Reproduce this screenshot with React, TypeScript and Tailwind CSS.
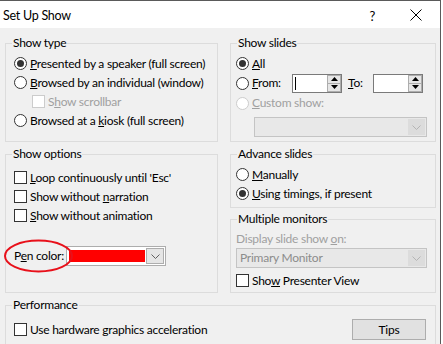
import type { ReactNode } from "react"

const Radio = ({ checked, disabled }: { checked?: boolean; disabled?: boolean }) => (
    <span className={`flex h-[13px] w-[13px] shrink-0 items-center justify-center rounded-full border bg-white ${disabled ? "border-[#cccccc]" : "border-[#333333]"}`}>
        {checked && <span className="h-[7px] w-[7px] rounded-full bg-[#333333]" />}
    </span>
)

const Check = ({ disabled }: { disabled?: boolean }) => (
    <span className={`h-[13px] w-[13px] shrink-0 border bg-white ${disabled ? "border-[#cccccc]" : "border-[#333333]"}`} />
)

const Group = ({ title, className, children }: { title: string; className: string; children?: ReactNode }) => (
    <div className={`relative shrink-0 border border-[#dcdcdc] ${className}`}>
        <span className="absolute -top-[9px] left-[6px] bg-[#f0f0f0] px-[1px] leading-[16px]">{title}</span>
        {children}
    </div>
)

const Chevron = ({ color }: { color: string }) => (
    <svg width="9" height="5" viewBox="0 0 9 5">
        <path d="M0.5 0.5 L4.5 4.5 L8.5 0.5" fill="none" stroke={color} strokeWidth="1" />
    </svg>
)

const Spin = ({ cursor }: { cursor?: boolean }) => (
    <div className="flex h-[19px] w-[50px] border border-[#7a7a7a] bg-white">
        <div className="flex flex-1 items-center pl-[2px]">
            {cursor && <span className="h-[13px] w-px bg-black" />}
        </div>
        <div className="flex w-[14px] flex-col border border-[#adadad] bg-[#e6e6e6]">
            <div className="flex flex-1 items-center justify-center border-b border-[#adadad]">
                <svg width="7" height="4" viewBox="0 0 7 4"><path d="M0 4 L3.5 0 L7 4 Z" fill="#000" /></svg>
            </div>
            <div className="flex flex-1 items-center justify-center">
                <svg width="7" height="4" viewBox="0 0 7 4"><path d="M0 0 L3.5 4 L7 0 Z" fill="#000" /></svg>
            </div>
        </div>
    </div>
)

const DisabledSelect = ({ text, className }: { text?: string; className: string }) => (
    <div className={`flex h-[20px] border border-[#c4c4c4] bg-[#e8e8e8] ${className}`}>
        <div className="flex flex-1 items-center pl-[3px] text-[#8c8c8c]">{text}</div>
        <div className="m-[1px] flex w-[17px] items-center justify-center bg-[#dcdcdc]">
            <Chevron color="#b4b4b4" />
        </div>
    </div>
)

const row = "flex h-[19px] items-center gap-[3px]"

export default function App() {
    return (
        <div className="h-[344px] w-[443px] overflow-hidden whitespace-nowrap bg-white font-['Lato',sans-serif] text-[12px] leading-[16px] tracking-[-0.25px] text-black">
            <div className="flex h-full w-[441px] flex-col border-r border-t border-[#5a5a5a]">

                <div className="flex h-[27px] shrink-0 items-center bg-white pl-[3px]">
                    <span className="pt-[2px] text-[12.5px]">Set Up Show</span>
                    <span className="ml-auto pt-[2px] text-[13px]">?</span>
                    <svg className="ml-[35px] mr-[18px]" width="12" height="12" viewBox="0 0 12 12">
                        <path d="M0.5 0.5 L11.5 11.5 M11.5 0.5 L0.5 11.5" stroke="#000" strokeWidth="1" />
                    </svg>
                </div>

                <div className="flex flex-1 flex-col bg-[#f0f0f0] pl-[5px] pt-[15px]">

                    <div className="flex shrink-0 gap-[12px]">
                        <Group title="Show type" className="h-[99px] w-[213px]">
                            <div className="flex flex-col pl-[8px] pt-[10px]">
                                <div className={row}><Radio checked /><span><u>P</u>resented by a speaker (full screen)</span></div>
                                <div className={row}><Radio /><span><u>B</u>rowsed by an individual (window)</span></div>
                                <div className={`${row} h-[18px] pl-[18px] text-[#a0a0a0]`}><Check disabled /><span>S<u>h</u>ow scrollbar</span></div>
                                <div className={row}><Radio /><span>Browsed at a <u>k</u>iosk (full screen)</span></div>
                            </div>
                        </Group>

                        <Group title="Show slides" className="h-[99px] w-[206px]">
                            <div className="flex flex-col pl-[5px] pt-[10px]">
                                <div className={row}><Radio checked /><span><u>A</u>ll</span></div>
                                <div className="flex h-[20px] items-center gap-[3px]">
                                    <Radio />
                                    <span className="w-[37px]"><u>F</u>rom:</span>
                                    <Spin cursor />
                                    <span className="ml-[3px] w-[22px]"><u>T</u>o:</span>
                                    <Spin />
                                </div>
                                <div className="flex h-[20px] items-center gap-[3px] text-[#a0a0a0]"><Radio disabled /><span><u>C</u>ustom show:</span></div>
                                <DisabledSelect className="ml-[18px] mt-[4px] w-[173px]" />
                            </div>
                        </Group>
                    </div>

                    <div className="mt-[12px] flex shrink-0 gap-[12px]">
                        <Group title="Show options" className="h-[139px] w-[213px]">
                            <div className="flex flex-col pl-[8px] pt-[13px]">
                                <div className={row}><Check /><span><u>L</u>oop continuously until 'Esc'</span></div>
                                <div className={row}><Check /><span>Show without <u>n</u>arration</span></div>
                                <div className={row}><Check /><span><u>S</u>how without animation</span></div>
                                <div className="mt-[21px] flex h-[20px] items-center">
                                    <span className="w-[52px]">P<u>e</u>n color:</span>
                                    <div className="flex h-[20px] w-[100px] items-center border border-[#adadad] bg-white pl-[2px]">
                                        <span className="h-[12px] w-[76px] bg-[#ff0000]" />
                                        <div className="ml-auto mr-[1px] flex h-[16px] w-[18px] items-center justify-center border border-[#adadad] bg-[#e5e5e5]">
                                            <Chevron color="#606060" />
                                        </div>
                                    </div>
                                </div>
                            </div>
                            <svg className="absolute left-[-3px] top-[84px]" width="72" height="35" viewBox="0 0 72 35">
                                <ellipse cx="35.5" cy="17" rx="33.5" ry="15.5" fill="none" stroke="#e8101a" strokeWidth="2" />
                            </svg>
                        </Group>

                        <div className="flex w-[206px] flex-col gap-[11px]">
                            <Group title="Advance slides" className="h-[54px]">
                                <div className="flex flex-col pl-[5px] pt-[10px]">
                                    <div className={row}><Radio /><span><u>M</u>anually</span></div>
                                    <div className={row}><Radio checked /><span><u>U</u>sing timings, if present</span></div>
                                </div>
                            </Group>
                            <Group title="Multiple monitors" className="h-[74px]">
                                <div className="flex flex-col pl-[5px] pt-[10px]">
                                    <div className="flex h-[17px] items-center text-[#a0a0a0]">Display slide show&nbsp;<u>o</u>n:</div>
                                    <DisabledSelect text="Primary Monitor" className="mt-[1px] w-[191px]" />
                                    <div className={`${row} mt-[3px] h-[18px]`}><Check /><span>Sho<u>w</u> Presenter View</span></div>
                                </div>
                            </Group>
                        </div>
                    </div>

                    <Group title="Performance" className="mt-[12px] h-[60px] w-[431px]">
                        <div className="flex items-center justify-between pl-[8px] pr-[9px] pt-[13px]">
                            <div className={row}><Check /><span>Use hardware <u>g</u>raphics acceleration</span></div>
                            <button className="flex h-[21px] w-[74px] items-center justify-center border border-[#adadad] bg-[#e1e1e1]">Tips</button>
                        </div>
                    </Group>
                </div>
            </div>
        </div>
    )
}
